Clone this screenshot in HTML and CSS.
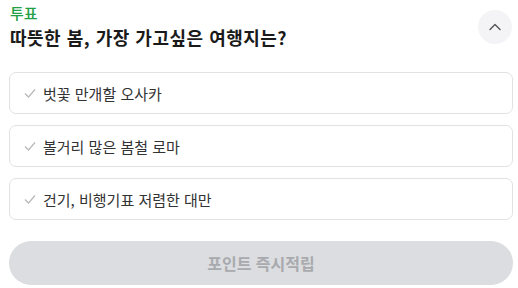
FILE: index.html
```html
<!DOCTYPE html>
<html lang="ko">
<head>
<meta charset="utf-8">
<link rel="stylesheet" href="styles.css">
</head>
<body>
<div class="poll">
  <div class="head">
    <div class="titles">
      <div class="label">투표</div>
      <div class="question">따뜻한 봄, 가장 가고싶은 여행지는?</div>
    </div>
    <button class="toggle" aria-label="접기">
      <svg width="12" height="8" viewBox="0 0 12 8"><path d="M1 6.5 L6 1.5 L11 6.5" fill="none" stroke="#555" stroke-width="1.4" stroke-linecap="round" stroke-linejoin="round"/></svg>
    </button>
  </div>
  <div class="options">
    <div class="option"><svg class="check" width="12" height="10" viewBox="0 0 12 10"><path d="M1 5.5 L4.5 9 L11 1.5" fill="none" stroke="#b8b8b8" stroke-width="1.2"/></svg><span>벗꽃 만개할 오사카</span></div>
    <div class="option"><svg class="check" width="12" height="10" viewBox="0 0 12 10"><path d="M1 5.5 L4.5 9 L11 1.5" fill="none" stroke="#b8b8b8" stroke-width="1.2"/></svg><span>볼거리 많은 봄철 로마</span></div>
    <div class="option"><svg class="check" width="12" height="10" viewBox="0 0 12 10"><path d="M1 5.5 L4.5 9 L11 1.5" fill="none" stroke="#b8b8b8" stroke-width="1.2"/></svg><span>건기, 비행기표 저렴한 대만</span></div>
  </div>
  <button class="submit">포인트 즉시적립</button>
</div>
</body>
</html>
```
FILE: styles.css
```css
* { box-sizing: border-box; }
body {
  margin: 0;
  background: #fff;
  font-family: "Noto Sans CJK KR", "Noto Sans", sans-serif;
  color: #222;
}
.poll {
  padding: 4px 6px 0 9px;
  width: 518px;
}
.head {
  display: flex;
  justify-content: space-between;
  align-items: flex-start;
}
.titles { padding-left: 1px; }
.label {
  color: #22a045;
  font-size: 15px;
  font-weight: 500;
  line-height: 18px;
}
.question {
  font-size: 18px;
  letter-spacing: 0.5px;
  font-weight: 700;
  line-height: 26px;
  margin-top: 2px;
  color: #1a1a1a;
}
.toggle {
  width: 34px;
  height: 34px;
  border-radius: 50%;
  border: none;
  background: #f4f4f6;
  margin-top: 6px;
  padding: 0;
  display: flex;
  align-items: center;
  justify-content: center;
}
.options {
  display: flex;
  flex-direction: column;
  gap: 11px;
  margin-top: 22px;
  margin-right: -1px;
}
.option {
  height: 42px;
  border: 1px solid #e2e2e2;
  border-radius: 7px;
  display: flex;
  align-items: center;
  padding-left: 14px;
  font-size: 15px;
  color: #333;
}
.check { margin-right: 7px; }
.submit {
  margin-top: 21px;
  width: 504px;
  height: 44px;
  border: none;
  border-radius: 22px;
  background: #dcdde0;
  color: #a9aaae;
  font-family: inherit;
  font-size: 16px;
  font-weight: 700;
}
```
